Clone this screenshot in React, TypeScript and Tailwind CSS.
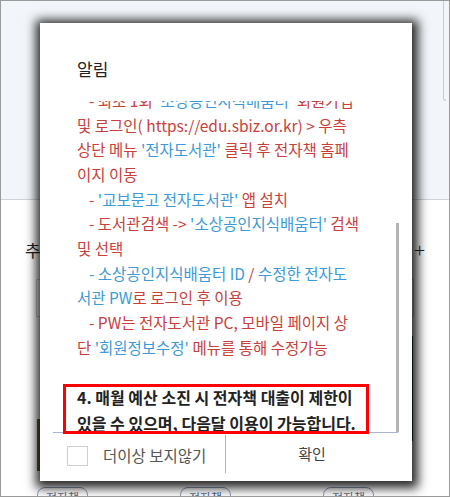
const R = 'text-[#c9403a]';
const B = 'text-[#3b9ad8]';

type Seg = [string, 'r' | 'b'];

const lines: { indent?: boolean; segs: Seg[] }[] = [
  { indent: true, segs: [['- 최초 1회 ', 'r'], ["'소상공인지식배움터'", 'b'], [' 회원가입', 'r']] },
  { segs: [['및 로그인( https://edu.sbiz.or.kr) > 우측', 'r']] },
  { segs: [['상단 메뉴 ', 'r'], ["'전자도서관'", 'b'], [' 클릭 후 전자책 홈페', 'r']] },
  { segs: [['이지 이동', 'r']] },
  { indent: true, segs: [['- ', 'r'], ["'교보문고 전자도서관'", 'b'], [' 앱 설치', 'r']] },
  { indent: true, segs: [['- 도서관검색 -> ', 'r'], ["'소상공인지식배움터'", 'b'], [' 검색', 'r']] },
  { segs: [['및 선택', 'r']] },
  { indent: true, segs: [['- 소상공인지식배움터 ID ', 'b'], ['/', 'r'], [' 수정한 전자도', 'b']] },
  { segs: [['서관 PW', 'b'], ['로 로그인 후 이용', 'r']] },
  { indent: true, segs: [['- PW는 전자도서관 PC, 모바일 페이지 상', 'r']] },
  { segs: [['단 ', 'r'], ["'회원정보수정'", 'b'], [' 메뉴를 통해 수정가능', 'r']] },
];

function Notice() {
  return (
    <div className="absolute left-[39px] top-[22px] w-[372px] h-[458px] bg-white shadow-[1px_2px_10px_5px_rgba(0,0,0,0.85)] flex flex-col">
      {/* Title */}
      <div className="pt-[34px] pl-[37px] h-[58px] text-[17px] leading-[24px] text-[#222]">알림</div>

      {/* Scroll body */}
      <div className="relative mt-[20px] mx-[13px] h-[331px] overflow-hidden">
        <div className="-mt-[13px] pl-[24px] text-[15.5px] leading-[24.67px]">
          {lines.map((l, i) => (
            <div key={i} className={`whitespace-nowrap ${l.indent ? 'pl-[12px]' : ''}`}>
              {l.segs.map(([t, c], j) => (
                <span key={j} className={c === 'r' ? R : B}>{t}</span>
              ))}
            </div>
          ))}
          <div className="h-[24.67px]" />
          <div className="font-bold text-[16px] text-[#222] leading-[26px] whitespace-nowrap">
            <div>4. 매월 예산 소진 시 전자책 대출이 제한이</div>
            <div>있을 수 있으며, 다음달 이용이 가능합니다.</div>
          </div>
        </div>
        {/* scrollbar thumb */}
        <div className="absolute right-0 top-[122px] w-[3px] h-[209px] bg-[#b4b4b4]" />
      </div>

      {/* Footer */}
      <div className="mx-[13px] mr-[14px] flex h-[47px] border-t border-[#aab3cf]">
        <div className="w-[172px] flex items-center pl-[14px] gap-[15px]">
          <div className="w-[21px] h-[20px] border border-[#cfcfcf]" />
          <span className="text-[15.5px] text-[#555]">더이상 보지않기</span>
        </div>
        <div className="flex-1 flex items-center justify-center border-l border-[#aab3cf] my-[2px] mb-[6px] text-[15px] text-[#444]">
          확인
        </div>
      </div>
    </div>
  );
}

export default function App() {
  return (
    <div className="relative w-[450px] h-[497px] overflow-hidden border border-[#9a9a9a] bg-white font-['Noto_Sans_CJK_KR','Noto_Sans',sans-serif]">
      {/* page behind */}
      <div className="h-[199px] bg-[#f2f6fa] border-b border-[#cfd3d8] relative">
        <div className="absolute right-[3px] top-0 w-[3px] h-[100px] border-l border-b border-[#c8ccd2] rounded-bl-[3px]" />
      </div>
      <div className="flex justify-between items-center px-[24px] mt-[38px] h-[24px] text-[17px] text-[#222]">
        <span>추</span>
        <span className="text-[20px] font-light">+</span>
      </div>
      <div className="mx-[35px] mt-[17px] h-[38px] border border-[#cfcfcf]" />
      <div className="flex justify-between mx-[36px] mt-[19px]">
        <div className="w-[40px] h-[52px] mt-[83px] bg-[#6d5c3e]" />
        <div className="w-[40px] h-[105px] bg-[#21433a]" />
      </div>
      <div className="flex gap-[92px] pl-[36px] mt-[16px]">
        {[0, 1, 2].map(i => (
          <div key={i} className="w-[51px] h-[24px] border border-[#8d9cba] rounded-lg text-[12px] text-[#5a6b8c] text-center leading-[20px]">
            전자책
          </div>
        ))}
      </div>

      <Notice />

      {/* highlight annotation */}
      <div className="absolute left-[62px] top-[383px] w-[306px] h-[50px] border-[3px] border-[#ff0000]" />
    </div>
  );
}
